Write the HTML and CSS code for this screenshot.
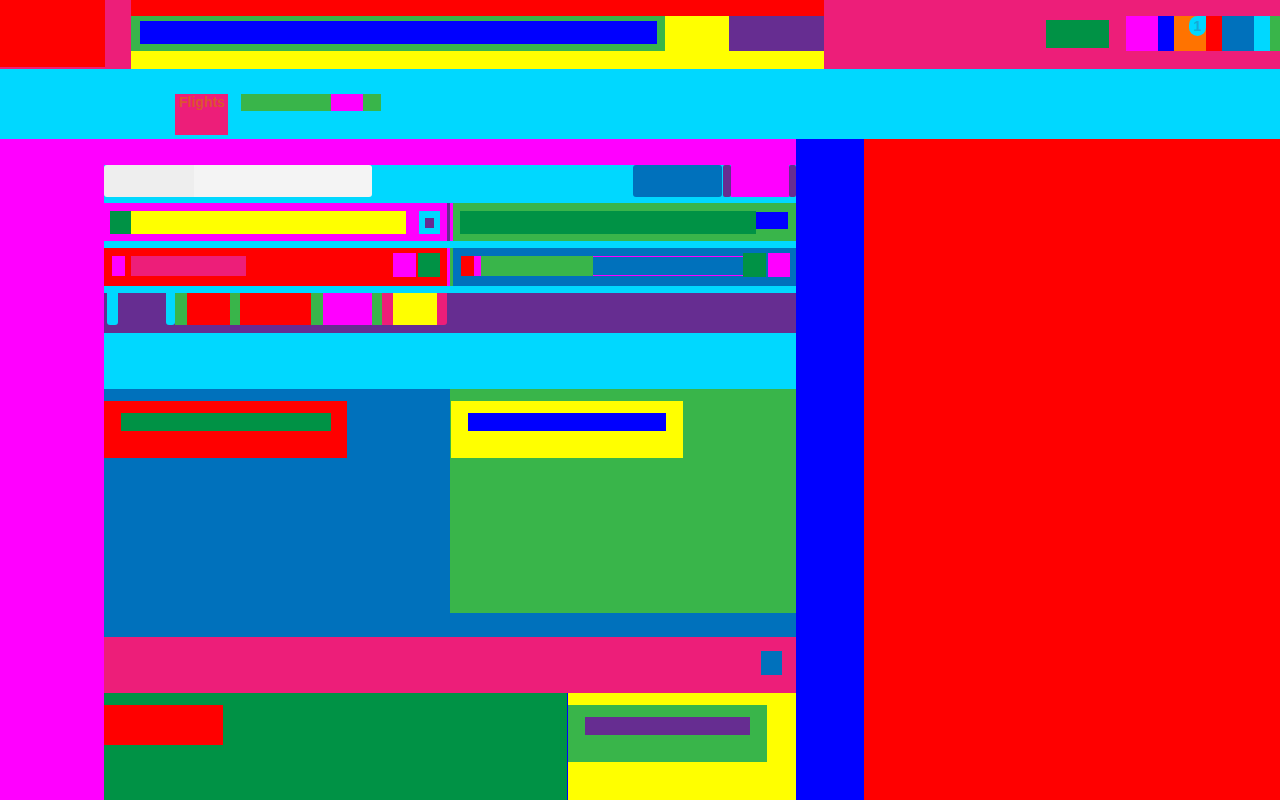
FILE: index.html
```html
<!DOCTYPE html>
<html lang="en">
<head>
<meta charset="utf-8">
<title>Flights</title>
<link rel="stylesheet" href="styles.css">
</head>
<body>
<header class="topbar">
  <div class="logo"></div>
  <div class="search-area">
    <div class="search-top"></div>
    <div class="search-row">
      <div class="search-box"><div class="search-input"></div></div>
      <div class="search-btn"></div>
    </div>
  </div>
  <div class="top-right">
    <div class="signin"></div>
    <div class="icons">
      <span class="ic ic-m"></span>
      <span class="ic ic-b"></span>
      <span class="ic ic-o"><span class="badge">1</span></span>
      <span class="ic ic-r"></span>
      <span class="ic ic-db"></span>
      <span class="ic ic-c"></span>
      <span class="ic ic-g"></span>
    </div>
  </div>
</header>
<nav class="nav">
  <div class="tab">Flights</div>
  <div class="navbar"><span class="navbar-hl"></span></div>
</nav>
<div class="main">
  <aside class="side-l"></aside>
  <section class="center">
    <div class="top-pad"></div>
    <div class="row1">
      <div class="grey-input"></div>
      <div class="spacer"></div>
      <div class="go-btn"></div>
      <div class="p8"></div>
      <div class="m58"></div>
      <div class="p7"></div>
    </div>
    <div class="row2">
      <div class="box-l2">
        <span class="g21"></span><span class="y275"></span>
        <span class="chk"><span class="chk-in"></span></span>
      </div>
      <div class="sep-p"></div><div class="sep-m"></div>
      <div class="box-r2"><span class="dg296"></span><span class="b32"></span></div>
    </div>
    <div class="row3">
      <div class="box-l3">
        <span class="m13"></span><span class="pk115"></span>
        <span class="grow"></span>
        <span class="m23"></span><span class="dg22"></span>
      </div>
      <div class="sep-m"></div><div class="sep-g"></div>
      <div class="box-r3">
        <span class="r13"></span><span class="m7"></span><span class="g112"></span>
        <span class="b150"></span><span class="dg23"></span><span class="m22"></span>
      </div>
    </div>
    <div class="row4">
      <span class="c11"></span><span class="p48"></span><span class="c9"></span>
      <span class="g12"></span><span class="r43"></span><span class="g10"></span>
      <span class="r71"></span><span class="g12"></span><span class="m49"></span>
      <span class="g10"></span><span class="pk11"></span><span class="y44"></span>
      <span class="pk10"></span>
    </div>
    <div class="gap56"></div>
    <div class="panel">
      <div class="panel-l"><div class="card-red"><span class="card-bar dg"></span></div></div>
      <div class="panel-r"><div class="card-yel"><span class="card-bar bl"></span></div></div>
    </div>
    <div class="pinkbar"><span class="sq"></span></div>
    <div class="bottom">
      <div class="bot-l"><div class="red-btn"></div></div>
      <div class="bot-r"><div class="card-grn"><span class="card-bar pu"></span></div></div>
    </div>
  </section>
  <aside class="side-b"></aside>
  <aside class="side-r"></aside>
</div>
</body>
</html>
```
FILE: styles.css
```css
* { box-sizing: border-box; }
html, body { margin: 0; padding: 0; }
body {
  width: 1280px; height: 800px; overflow: hidden;
  font-family: "Liberation Sans", Arial, sans-serif;
  background: #00d8ff;
}
.topbar { display: flex; height: 69px; background: #ed1e79; }
.logo { width: 105px; height: 67px; background: #ff0000; margin-right: 26px; }
.search-area { width: 693px; height: 69px; background: #ffff00; display: flex; flex-direction: column; }
.search-top { height: 16px; background: #ff0000; }
.search-row { display: flex; justify-content: space-between; }
.search-box { width: 534px; height: 35px; background: #39b54a; padding: 5px 8px 7px 9px; }
.search-input { width: 100%; height: 100%; background: #0000ff; }
.search-btn { width: 95px; height: 35px; background: #662d91; }
.top-right { flex: 1; display: flex; padding-left: 222px; overflow: hidden; }
.signin { width: 63px; height: 28px; margin-top: 20px; background: #009245; margin-right: 17px; flex: none; }
.icons { display: flex; margin-top: 16px; height: 35px; flex: none; }
.ic { display: block; height: 35px; position: relative; }
.ic-m { width: 32px; background: #ff00ff; }
.ic-b { width: 16px; background: #0000ff; }
.ic-o { width: 32px; background: #ff7300; }
.ic-r { width: 16px; background: #ff0000; }
.ic-db { width: 32px; background: #0071bc; }
.ic-c { width: 16px; background: #00d8ff; }
.ic-g { width: 16px; background: #39b54a; }
.badge {
  position: absolute; left: 15px; top: 0; width: 17px; height: 20px;
  border-radius: 9px 0 9px 9px; background: #00d8ff; color: #18a9d6;
  font-size: 14px; font-weight: bold; line-height: 21px; text-align: center;
}
.nav { height: 70px; background: #00d8ff; display: flex; align-items: flex-start; padding: 25px 0 0 175px; }
.tab {
  width: 53px; height: 41px; background: #ed1e79; color: #dc5430;
  font-size: 14px; font-weight: bold; line-height: 17px; padding: 0 0 0 4px;
  margin-right: 13px; white-space: nowrap; overflow: hidden;
}
.navbar { width: 140px; height: 17px; background: #39b54a; padding-left: 90px; }
.navbar-hl { display: block; width: 32px; height: 17px; background: #ff00ff; }
.main { display: flex; height: 661px; }
.side-l { width: 104px; background: #ff00ff; }
.side-b { width: 68px; background: #0000ff; }
.side-r { flex: 1; background: #ff0000; }
.center { width: 692px; background: #00d8ff; display: flex; flex-direction: column; }
.top-pad { height: 26px; background: #ff00ff; }
.row1 { display: flex; height: 32px; margin-bottom: 6px; }
.grey-input { width: 268px; border-radius: 3px; background: linear-gradient(to right, #eeeeee 0, #eeeeee 90px, #f4f4f4 90px); }
.spacer { flex: 1; }
.go-btn { width: 89px; background: #0071bc; border-radius: 3px; margin-right: 1px; }
.p8 { width: 8px; background: #662d91; border-radius: 2px; }
.m58 { width: 58px; background: #ff00ff; }
.p7 { width: 7px; background: #662d91; border-radius: 2px; }
.row2, .row3 { display: flex; height: 38px; margin-bottom: 7px; }
.row2 span, .row3 span, .row4 span { display: block; }
.box-l2 { width: 343px; background: #ff00ff; display: flex; align-items: flex-start; padding: 8px 7px 0 6px; }
.g21 { width: 21px; height: 23px; background: #009245; }
.y275 { width: 275px; height: 23px; background: #ffff00; }
.chk { width: 21px; height: 23px; background: #00d8ff; margin-left: auto; padding: 7px 6px 6px 6px; }
.chk-in { width: 9px; height: 10px; background: #662d91; }
.sep-p { width: 3px; background: #662d91; }
.sep-m { width: 3px; background: #ff00ff; }
.sep-g { width: 3px; background: #39b54a; }
.box-r2 { width: 343px; background: #39b54a; display: flex; align-items: flex-start; padding: 8px 8px 0 7px; }
.dg296 { width: 296px; height: 23px; background: #009245; }
.b32 { width: 32px; height: 17px; background: #0000ff; margin-top: 1px; }
.box-l3 { width: 343px; background: #ff0000; display: flex; align-items: flex-start; padding: 5px 7px 0 8px; }
.m13 { width: 13px; height: 20px; background: #ff00ff; margin: 3px 6px 0 0; }
.pk115 { width: 115px; height: 20px; background: #ed1e79; margin-top: 3px; }
.grow { flex: 1; }
.m23 { width: 23px; height: 24px; background: #ff00ff; margin-right: 2px; }
.dg22 { width: 22px; height: 24px; background: #009245; }
.box-r3 { width: 343px; background: #0071bc; display: flex; align-items: flex-start; padding: 5px 6px 0 8px; }
.r13 { width: 13px; height: 20px; background: #ff0000; margin-top: 3px; }
.m7 { width: 7px; height: 20px; background: #ff00ff; margin-top: 3px; }
.g112 { width: 112px; height: 20px; background: #39b54a; margin-top: 3px; }
.b150 { width: 150px; height: 20px; background: #0071bc; margin-top: 3px; border-top: 1px solid #ff00ff; border-bottom: 1px solid #ff00ff; }
.dg23 { width: 23px; height: 24px; background: #009245; margin-right: 2px; }
.m22 { width: 22px; height: 24px; background: #ff00ff; }
.row4 { display: flex; height: 40px; background: #662d91; padding-left: 3px; align-items: flex-start; }
.row4 span { height: 32px; }
.c11 { width: 11px; background: #00d8ff; border-radius: 0 0 3px 3px; }
.p48 { width: 48px; background: #662d91; }
.c9 { width: 9px; background: #00d8ff; border-radius: 0 0 3px 3px; }
.g12 { width: 12px; background: #39b54a; }
.g10 { width: 10px; background: #39b54a; }
.r43 { width: 43px; background: #ff0000; }
.r71 { width: 71px; background: #ff0000; }
.m49 { width: 49px; background: #ff00ff; }
.pk11 { width: 11px; background: #ed1e79; }
.y44 { width: 44px; background: #ffff00; }
.pk10 { width: 10px; background: #ed1e79; border-radius: 0 0 3px 0; }
.gap56 { height: 56px; }
.panel { display: flex; height: 248px; background: #0071bc; }
.panel-l { width: 346px; padding-top: 12px; }
.panel-r { width: 346px; height: 224px; background: #39b54a; padding: 12px 0 0 1px; }
.card-red { width: 243px; height: 57px; background: #ff0000; padding: 12px 0 0 17px; }
.card-yel { width: 232px; height: 57px; background: #ffff00; padding: 12px 0 0 17px; }
.card-bar { display: block; height: 18px; }
.card-bar.dg { width: 210px; background: #009245; }
.card-bar.bl { width: 198px; background: #0000ff; }
.card-bar.pu { width: 165px; background: #662d91; }
.pinkbar { height: 56px; background: #ed1e79; display: flex; justify-content: flex-end; padding: 14px 14px 0 0; }
.sq { display: block; width: 21px; height: 24px; background: #0071bc; }
.bottom { display: flex; flex: 1; }
.bot-l { width: 464px; background: #009245; padding-top: 12px; border-right: 1px solid #0000ff; }
.red-btn { width: 119px; height: 40px; background: #ff0000; }
.bot-r { width: 228px; background: #ffff00; padding-top: 12px; }
.card-grn { width: 199px; height: 57px; background: #39b54a; padding: 12px 0 0 17px; }
```
